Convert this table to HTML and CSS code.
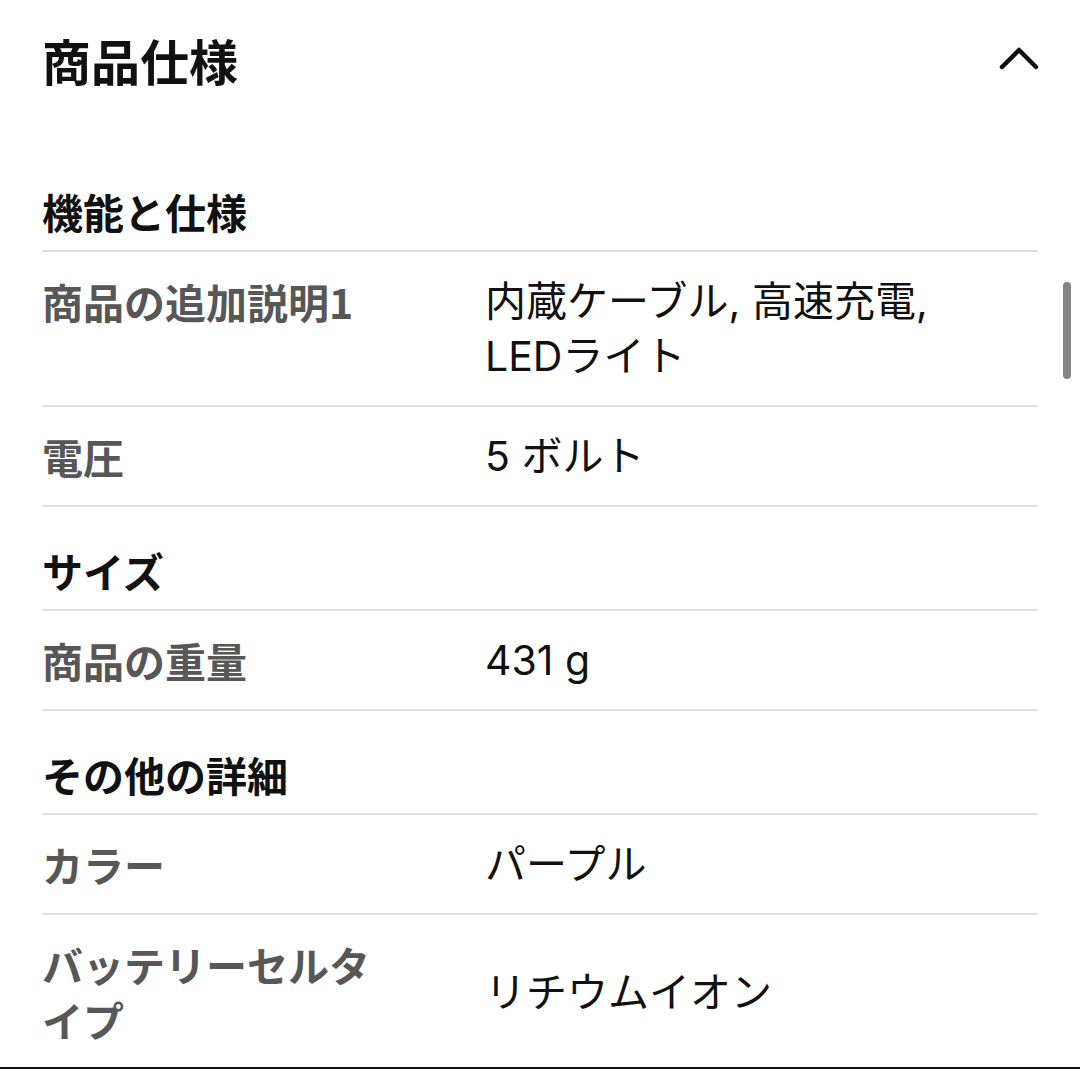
FILE: index.html
```html
<!DOCTYPE html>
<html lang="ja">
<head>
<meta charset="utf-8">
<link rel="stylesheet" href="styles.css">
</head>
<body>
<div class="page">
  <div class="title-row">
    <h1 class="title">商品仕様</h1>
    <svg class="chevron" width="40" height="26" viewBox="0 0 40 26"><path d="M3 22 L20 5 L37 22" fill="none" stroke="#111" stroke-width="4.5" stroke-linecap="round" stroke-linejoin="round"/></svg>
  </div>

  <h2 class="section first">機能と仕様</h2>
  <div class="row"><div class="label">商品の追加説明1</div><div class="value">内蔵ケーブル, 高速充電, LEDライト</div></div>
  <div class="row"><div class="label">電圧</div><div class="value">5 ボルト</div></div>

  <h2 class="section">サイズ</h2>
  <div class="row"><div class="label">商品の重量</div><div class="value">431 g</div></div>

  <h2 class="section">その他の詳細</h2>
  <div class="row"><div class="label">カラー</div><div class="value">パープル</div></div>
  <div class="row last"><div class="label">バッテリーセルタイプ</div><div class="value center">リチウムイオン</div></div>
</div>
<div class="scrollbar"></div>
</body>
</html>
```
FILE: styles.css
```css
html, body {
  margin: 0;
  padding: 0;
  background: #fff;
}
body {
  font-family: "Noto Sans CJK JP", "Noto Sans", sans-serif;
  color: #111;
  overflow: hidden;
}
.page {
  padding: 0 42px;
}
.title-row {
  display: flex;
  align-items: center;
  justify-content: space-between;
  padding-top: 29px;
  height: 61px;
}
.title {
  margin: 0;
  font-size: 49px;
  line-height: 58px;
  font-weight: 700;
  color: #111;
}
.chevron {
  margin-right: -1px;
  margin-top: -4px;
}
.section {
  margin: 0;
  font-size: 41px;
  line-height: 55px;
  font-weight: 700;
  color: #111;
  padding: 36px 0 11px;
  border-bottom: 2px solid #dedede;
}
.section.first {
  padding-top: 94px;
}
.row {
  display: flex;
  padding: 22px 0 21px;
  border-bottom: 2px solid #dedede;
  font-size: 41px;
  line-height: 55px;
}
.row.last {
  padding-bottom: 20px;
  border-bottom: 2px solid #111;
  margin-left: -42px;
  margin-right: -42px;
  padding-left: 42px;
  padding-right: 42px;
}
.label {
  width: 340px;
  flex: none;
  padding-right: 103px;
  font-weight: 700;
  color: #575757;
}
.value {
  flex: 1;
  font-family: "Inter", "Noto Sans CJK JP", sans-serif;
  font-weight: 400;
  color: #111;
  word-break: keep-all;
}
.value.center {
  align-self: center;
}
.scrollbar {
  position: fixed;
  left: 1063px;
  top: 282px;
  width: 8px;
  height: 97px;
  border-radius: 4px;
  background: #858585;
}
```
